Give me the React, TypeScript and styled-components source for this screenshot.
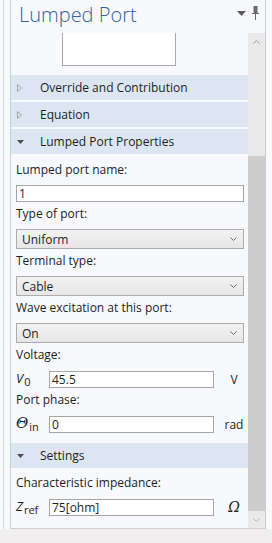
import * as React from 'react';
import styled, { createGlobalStyle } from 'styled-components';

const GlobalStyle = createGlobalStyle`
    html, body {
        margin: 0;
        padding: 0;
        background: #f7f9fd;
    }
    body {
        font-family: "Open Sans", "Noto Sans", sans-serif;
        font-size: 12px;
        color: #1e1e1e;
    }
`

const Screen = styled.div`
    width: 272px;
    height: 543px;
    display: flex;
    flex-direction: column;
    overflow: hidden;
`

const Workspace = styled.div`
    height: 529px;
    display: flex;
    padding-left: 3px;
    background: #f7f9fd;
`

const Gutter = styled.div`
    width: 6px;
    border-left: 1px solid #d6d6d6;
`

const StatusStrip = styled.div`
    flex: 1;
    background: #f0eeee;
`

const Panel = styled.div`
    width: 256px;
    box-sizing: border-box;
    display: flex;
    flex-direction: column;
    border-left: 1px solid #d0d0d0;
    border-right: 1px solid #cbcbcb;
`

const TitleBar = styled.div`
    height: 33px;
    flex: 0 0 33px;
    display: flex;
    align-items: center;
    padding-left: 8px;
    padding-right: 6px;
`

const Title = styled.h1`
    flex: 1;
    margin: 0;
    font-family: "Open Sans", "Noto Sans", sans-serif;
    font-weight: 300;
    font-size: 20px;
    line-height: 26px;
    margin-top: -4px;
    color: #34609f;
`

const TitleTools = styled.div`
    display: flex;
    align-items: center;
    gap: 6px;
    margin-top: -7px;
`

const PanelBody = styled.div`
    flex: 1;
    display: flex;
    border-bottom: 1px solid #cfcfcf;
    min-height: 0;
`

const Content = styled.div`
    width: 237px;
    overflow: hidden;
`

const Preview = styled.div`
    margin-left: 51px;
    width: 114px;
    height: 33px;
    box-sizing: border-box;
    background: #ffffff;
    border: 1px solid #a9a9a9;
    border-top: none;
    margin-bottom: 9px;
`

const SectionHeader = styled.div`
    height: 25px;
    display: flex;
    align-items: center;
    background: #dce6f2;
    margin-bottom: 2px;
    line-height: 25px;
`

const Caret = styled.span`
    width: 29px;
    display: flex;
    align-items: center;
    padding-left: 6px;
    box-sizing: border-box;
`

const Form = styled.div<{ $top?: number, $bottom?: number }>`
    display: flex;
    flex-direction: column;
    gap: 2px;
    padding: ${props => props.$top ?? 6}px 4px ${props => props.$bottom ?? 8}px 5px;
    margin-top: -2px;
`

const Field = styled.div`
    display: flex;
    flex-direction: column;
`

const Label = styled.div`
    line-height: 20px;
    margin-bottom: 5px;
`

const TextInput = styled.input`
    flex: 1 1 auto;
    height: 17px;
    box-sizing: border-box;
    border: 1px solid #a6a6a6;
    background: #ffffff;
    padding: 0 2px;
    margin: 0;
    font-family: inherit;
    font-size: 12px;
    color: #1e1e1e;
    outline: none;
    width: 100%;
    min-width: 0;
`

const Combo = styled.div`
    height: 20px;
    box-sizing: border-box;
    border: 1px solid #acacac;
    background: linear-gradient(#f2f2f2, #e6e6e6);
    display: flex;
    align-items: center;
    justify-content: space-between;
    padding: 0 6px 0 5px;
`

const QuantityRow = styled.div`
    height: 18px;
    display: flex;
    align-items: center;
`

const Symbol = styled.span<{ $serif?: boolean }>`
    flex: 0 0 auto;
    min-width: 28px;
    margin-right: 5px;
    white-space: nowrap;
    font-style: italic;
    font-size: ${props => props.$serif ? 15 : 13}px;
    font-family: ${props => props.$serif ? '"DejaVu Serif", "Liberation Serif", serif' : '"Open Sans", sans-serif'};

    sub {
        font-style: normal;
        font-family: "Open Sans", sans-serif;
        font-size: 11px;
        vertical-align: -3px;
        margin-left: 1px;
    }
`

const Unit = styled.span<{ $serif?: boolean }>`
    flex: 0 0 20px;
    margin-left: 10px;
    text-align: center;
    font-style: ${props => props.$serif ? 'italic' : 'normal'};
    font-size: ${props => props.$serif ? 14 : 12}px;
    font-family: ${props => props.$serif ? '"DejaVu Serif", serif' : 'inherit'};
`

const ScrollBar = styled.div`
    width: 17px;
    display: flex;
    flex-direction: column;
    background: #e9e9e9;
`

const ScrollArrow = styled.div`
    height: 17px;
    display: flex;
    align-items: center;
    justify-content: center;
`

const ScrollTrack = styled.div`
    flex: 1;
    display: flex;
    flex-direction: column;
`

const ScrollThumb = styled.div`
    margin-top: 106px;
    flex: 1;
    background: #cdcdcd;
`

const CollapsedIcon = () => (
    <svg width="5" height="8" viewBox="0 0 5 8">
        <path d="M0.5 0.5 L4.5 4 L0.5 7.5 Z" fill="none" stroke="#a3a3a3" strokeWidth="1" />
    </svg>
)

const ExpandedIcon = () => (
    <svg width="7" height="4" viewBox="0 0 7 4">
        <path d="M0 0 L7 0 L3.5 4 Z" fill="#4e4e4e" />
    </svg>
)

const Chevron = ({ up, color }: { up?: boolean, color: string }) => (
    <svg width="7" height="4" viewBox="0 0 7 4">
        <path d={up ? 'M0.5 3.5 L3.5 0.5 L6.5 3.5' : 'M0.5 0.5 L3.5 3.5 L6.5 0.5'} fill="none" stroke={color} strokeWidth="1" />
    </svg>
)

const MenuIcon = () => (
    <svg width="9" height="5" viewBox="0 0 9 5">
        <path d="M0 0 L9 0 L4.5 5 Z" fill="#5a5a5a" />
    </svg>
)

const PinIcon = () => (
    <svg width="7" height="14" viewBox="0 0 7 14">
        <rect x="1.5" y="0" width="4" height="7" fill="#6a6a6a" />
        <rect x="0" y="7" width="7" height="1" fill="#6a6a6a" />
        <rect x="3" y="8" width="1" height="6" fill="#6a6a6a" />
    </svg>
)

const Header = ({ title, open }: { title: string, open?: boolean }) => (
    <SectionHeader>
        <Caret>{open ? <ExpandedIcon /> : <CollapsedIcon />}</Caret>
        <span>{title}</span>
    </SectionHeader>
)

const Select = ({ value }: { value: string }) => (
    <Combo>
        <span>{value}</span>
        <Chevron color="#6a6a6a" />
    </Combo>
)

export default function App() {
    return (
        <Screen>
            <GlobalStyle />
            <Workspace>
                <Gutter />
                <Panel>
                    <TitleBar>
                        <Title>Lumped Port</Title>
                        <TitleTools>
                            <MenuIcon />
                            <PinIcon />
                        </TitleTools>
                    </TitleBar>
                    <PanelBody>
                        <Content>
                            <Preview />
                            <Header title="Override and Contribution" />
                            <Header title="Equation" />
                            <Header title="Lumped Port Properties" open />
                            <Form $bottom={10}>
                                <Field>
                                    <Label>Lumped port name:</Label>
                                    <TextInput defaultValue="1" readOnly />
                                </Field>
                                <Field>
                                    <Label>Type of port:</Label>
                                    <Select value="Uniform" />
                                </Field>
                                <Field>
                                    <Label>Terminal type:</Label>
                                    <Select value="Cable" />
                                </Field>
                                <Field>
                                    <Label>Wave excitation at this port:</Label>
                                    <Select value="On" />
                                </Field>
                                <Field>
                                    <Label>Voltage:</Label>
                                    <QuantityRow>
                                        <Symbol>V<sub>0</sub></Symbol>
                                        <TextInput defaultValue="45.5" readOnly />
                                        <Unit>V</Unit>
                                    </QuantityRow>
                                </Field>
                                <Field>
                                    <Label>Port phase:</Label>
                                    <QuantityRow>
                                        <Symbol $serif>Θ<sub>in</sub></Symbol>
                                        <TextInput defaultValue="0" readOnly />
                                        <Unit>rad</Unit>
                                    </QuantityRow>
                                </Field>
                            </Form>
                            <Header title="Settings" open />
                            <Form $top={5}>
                                <Field>
                                    <Label>Characteristic impedance:</Label>
                                    <QuantityRow>
                                        <Symbol>Z<sub>ref</sub></Symbol>
                                        <TextInput defaultValue="75[ohm]" readOnly />
                                        <Unit $serif>Ω</Unit>
                                    </QuantityRow>
                                </Field>
                            </Form>
                        </Content>
                        <ScrollBar>
                            <ScrollArrow><Chevron up color="#9c9c9c" /></ScrollArrow>
                            <ScrollTrack>
                                <ScrollThumb />
                            </ScrollTrack>
                            <ScrollArrow><Chevron color="#b0b0b0" /></ScrollArrow>
                        </ScrollBar>
                    </PanelBody>
                </Panel>
            </Workspace>
            <StatusStrip />
        </Screen>
    );
}
